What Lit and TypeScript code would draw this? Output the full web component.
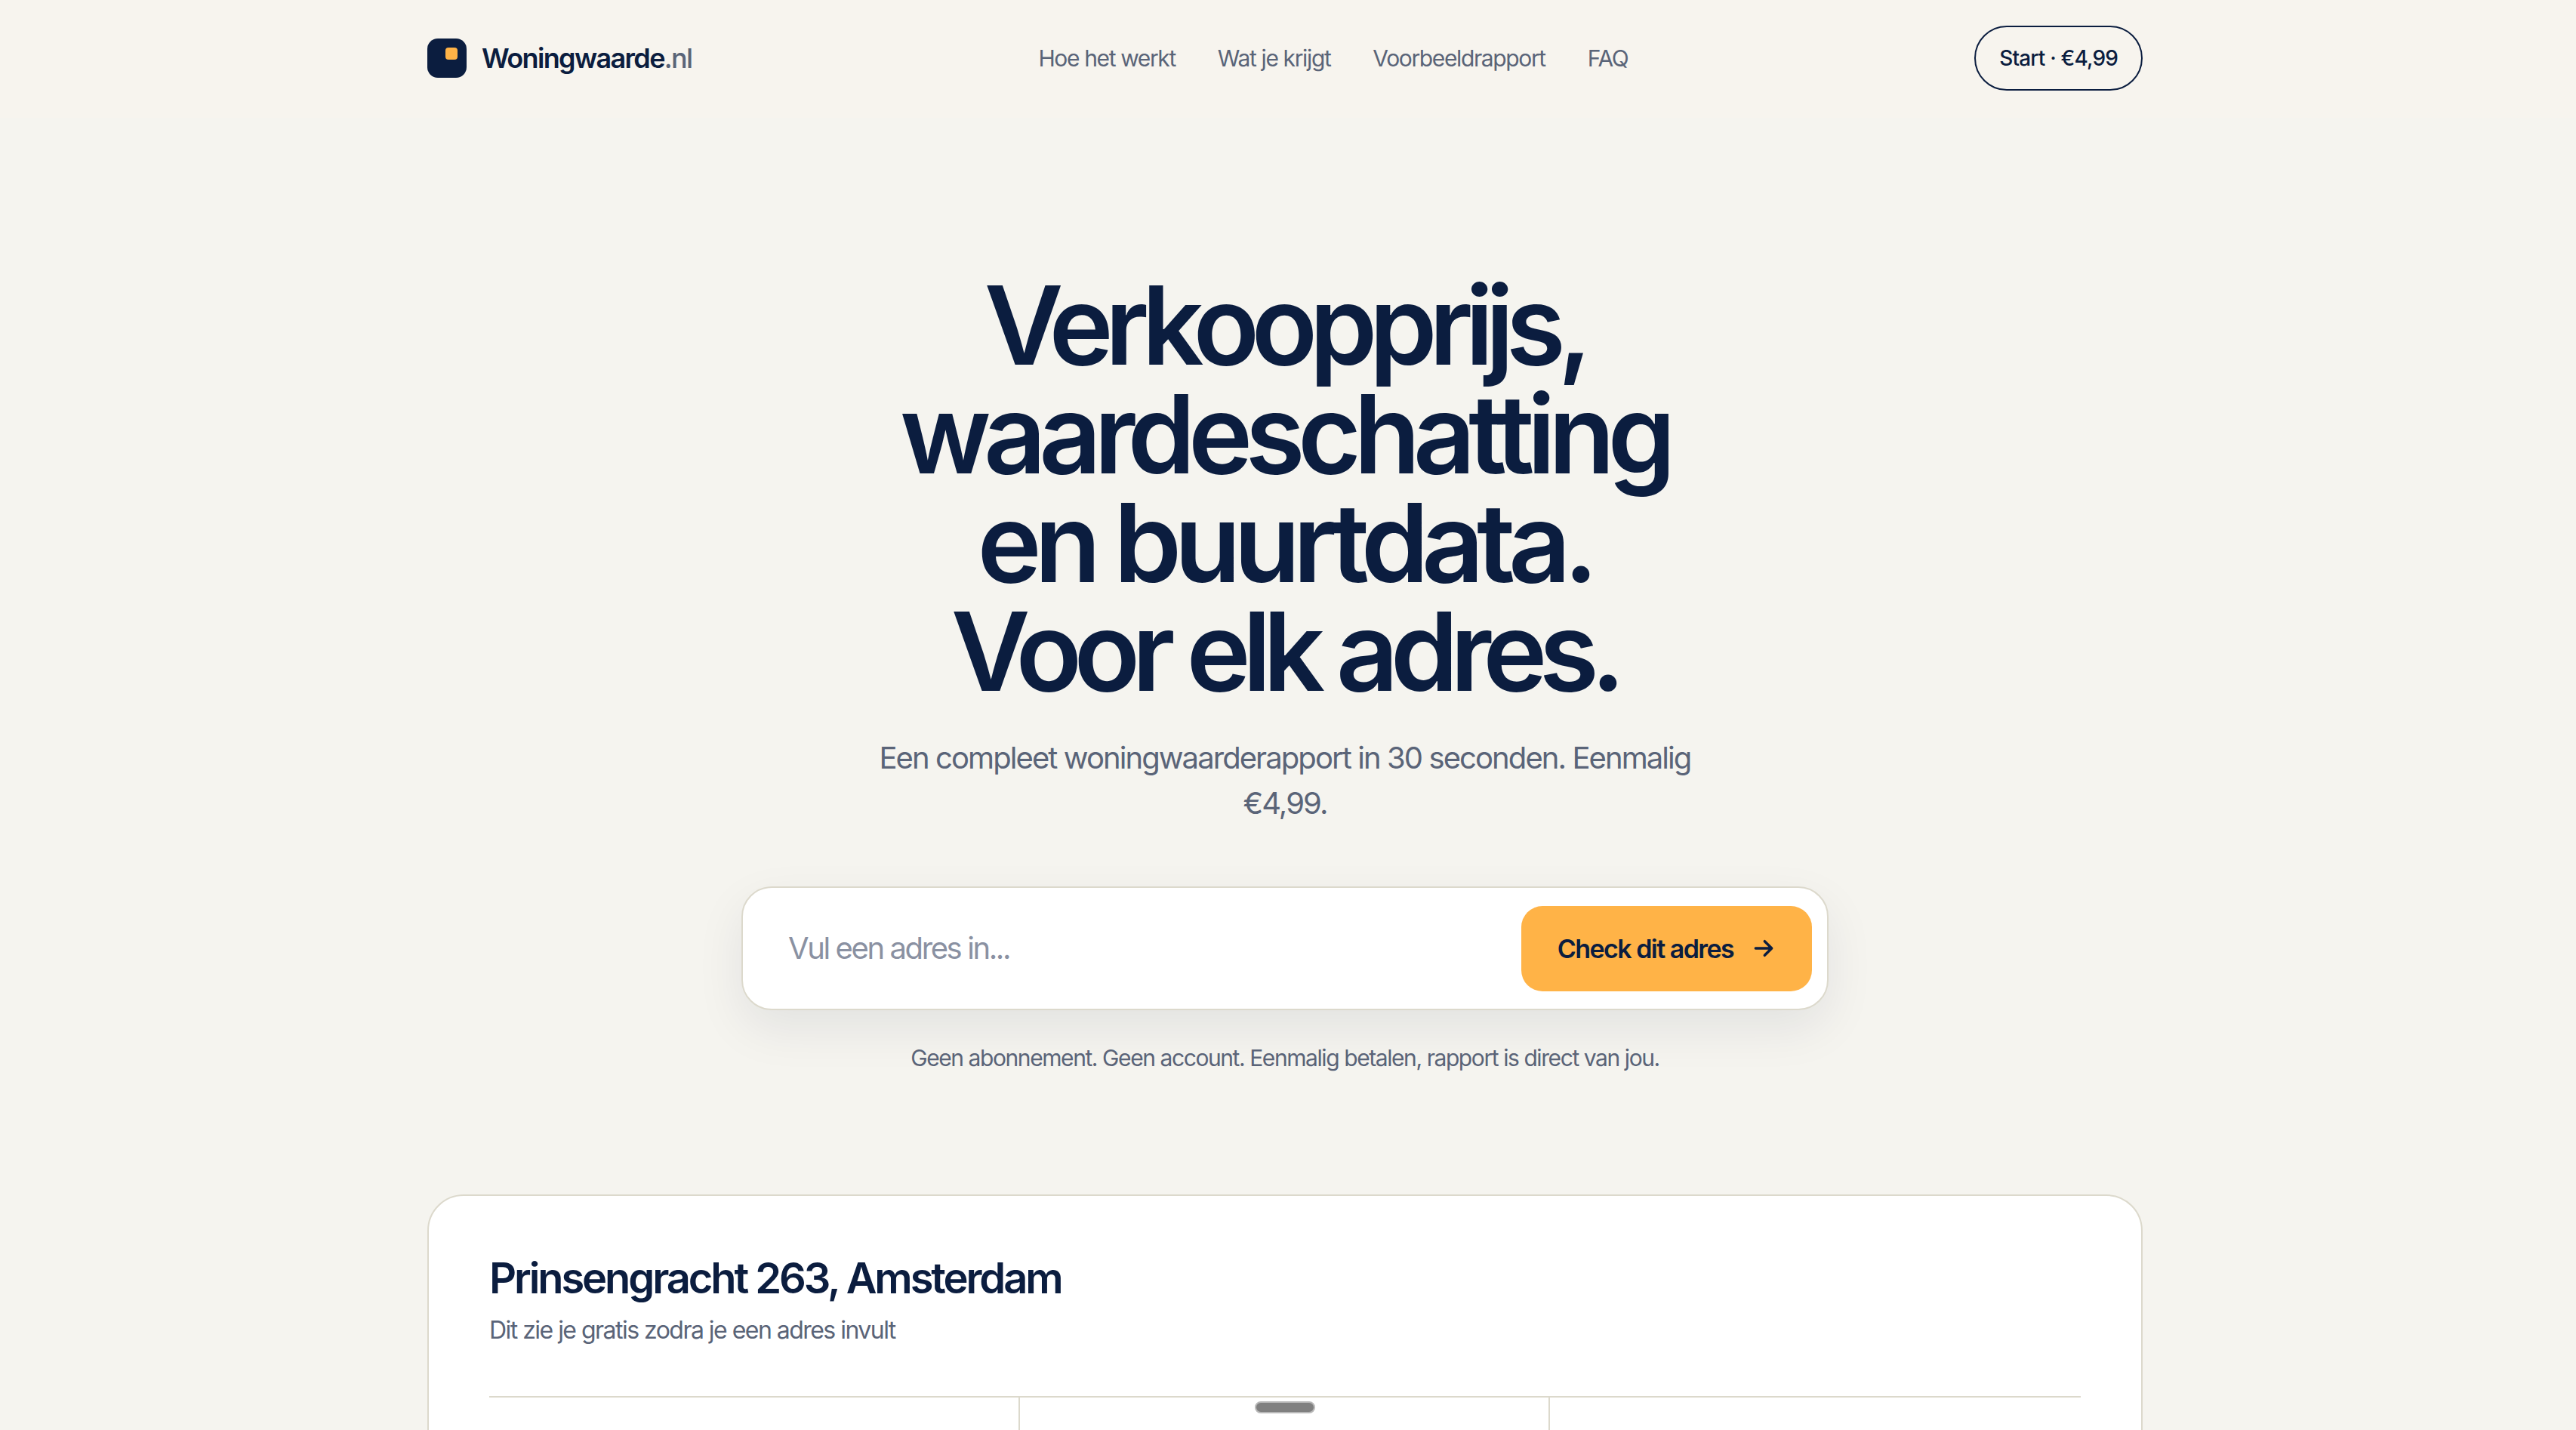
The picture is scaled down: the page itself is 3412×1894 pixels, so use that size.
import { LitElement, html, css } from "lit";
import { customElement } from "lit/decorators.js";

@customElement("app-root")
export class AppRoot extends LitElement {
  static styles = css`
    :host {
      display: block;
      height: 1894px;
      overflow: hidden;
      position: relative;
      background: #f5f4ef;
      font-family: Inter, "Noto Sans", sans-serif;
      color: #0b1d3f;
    }
    * { box-sizing: border-box; }
    .wrap { width: 2272px; margin: 0 auto; position: relative; left: -4px; }
    .navbar { background: #f7f4ee; height: 156px; }
    .nav { height: 154px; display: flex; justify-content: space-between; align-items: center; }
    .brand { display: flex; align-items: center; gap: 20px; font-size: 36px; font-weight: 600; letter-spacing: -1.65px; }
    .brand span span { color: #5a6478; font-weight: 500; }
    .logo { width: 52px; height: 52px; border-radius: 14px; background: #0b1d3f; position: relative; }
    .logo i { position: absolute; top: 12px; right: 12px; width: 16px; height: 16px; border-radius: 4px; background: #ffb347; }
    .links { display: flex; gap: 56px; font-size: 30px; color: #5a6478; letter-spacing: -1.37px; }
    .cta { height: 86px; padding: 0 31px; border: 2px solid #0b1d3f; border-radius: 999px; display: flex; align-items: center; font-size: 28px; font-weight: 500; letter-spacing: -0.84px; }
    .hero { padding-top: 203px; display: flex; flex-direction: column; align-items: center; text-align: center; }
    h1 { margin: 0 2px 0 0; font-size: 144px; line-height: 144px; font-weight: 600; letter-spacing: -9.6px; }
    h1 span { letter-spacing: -10.7px; }
    .sub { margin: 39px 0 0; width: 1120px; font-size: 40px; line-height: 60px; color: #5a6478; letter-spacing: -1.92px; }
    .search {
      margin-top: 80px; width: 1440px; height: 164px; background: #fff; border: 2px solid #dcd9cc; border-radius: 40px;
      box-shadow: 0 24px 64px rgba(11, 29, 63, 0.08); display: flex; align-items: center; justify-content: space-between; padding: 0 20px 0 60px;
    }
    .ph { font-size: 40px; color: #8a91a2; letter-spacing: -2.4px; padding-bottom: 1px; }
    .go { width: 385px; height: 113px; border-radius: 28px; background: #ffb347; display: flex; align-items: center; justify-content: center; gap: 24px; font-size: 34px; font-weight: 600; letter-spacing: -1.55px; }
    .note { margin: 45px 0 0; font-size: 30px; color: #5a6478; letter-spacing: -1.42px; }
    .card { margin-top: 163px; background: #fff; border: 2px solid #dcd9cc; border-radius: 48px; padding: 75px 80px 0; height: 600px; }
    h2 { margin: 0; font-size: 56px; line-height: 68px; font-weight: 600; letter-spacing: -3.1px; }
    .desc { margin: 11px 0 0; font-size: 32px; line-height: 48px; color: #5a6478; letter-spacing: -1.53px; }
    .grid { margin-top: 63px; border-top: 2px solid #dcd9cc; display: grid; grid-template-columns: repeat(3, 1fr); height: 200px; }
    .grid div:not(:last-child) { border-right: 2px solid #dcd9cc; }
    .handle { position: absolute; left: 1662px; top: 1856px; width: 80px; height: 16px; border-radius: 8px; background: #808080; border: 2px solid #b8b8b8; }
  `;

  render() {
    return html`
      <div class="navbar">
        <nav class="wrap nav">
          <div class="brand"><div class="logo"><i></i></div><span>Woningwaarde<span>.nl</span></span></div>
          <div class="links"><span>Hoe het werkt</span><span>Wat je krijgt</span><span>Voorbeeldrapport</span><span>FAQ</span></div>
          <div class="cta">Start · €4,99</div>
        </nav>
      </div>
      <main class="wrap">
        <section class="hero">
          <h1><span>Verkoopprijs,</span><br />waardeschatting<br />en buurtdata.<br /><span>Voor elk adres.</span></h1>
          <p class="sub">Een compleet woningwaarderapport in 30 seconden. Eenmalig €4,99.</p>
          <div class="search">
            <span class="ph">Vul een adres in...</span>
            <div class="go">Check dit adres
              <svg width="32" height="32" viewBox="0 0 24 24" fill="none" stroke="currentColor" stroke-width="2.6" stroke-linecap="round" stroke-linejoin="round"><path d="M4 12h16M13 5l7 7-7 7" /></svg>
            </div>
          </div>
          <p class="note">Geen abonnement. Geen account. Eenmalig betalen, rapport is direct van jou.</p>
        </section>
        <section class="card">
          <h2>Prinsengracht 263, Amsterdam</h2>
          <p class="desc">Dit zie je gratis zodra je een adres invult</p>
          <div class="grid"><div></div><div></div><div></div></div>
        </section>
      </main>
      <div class="handle"></div>
    `;
  }
}
